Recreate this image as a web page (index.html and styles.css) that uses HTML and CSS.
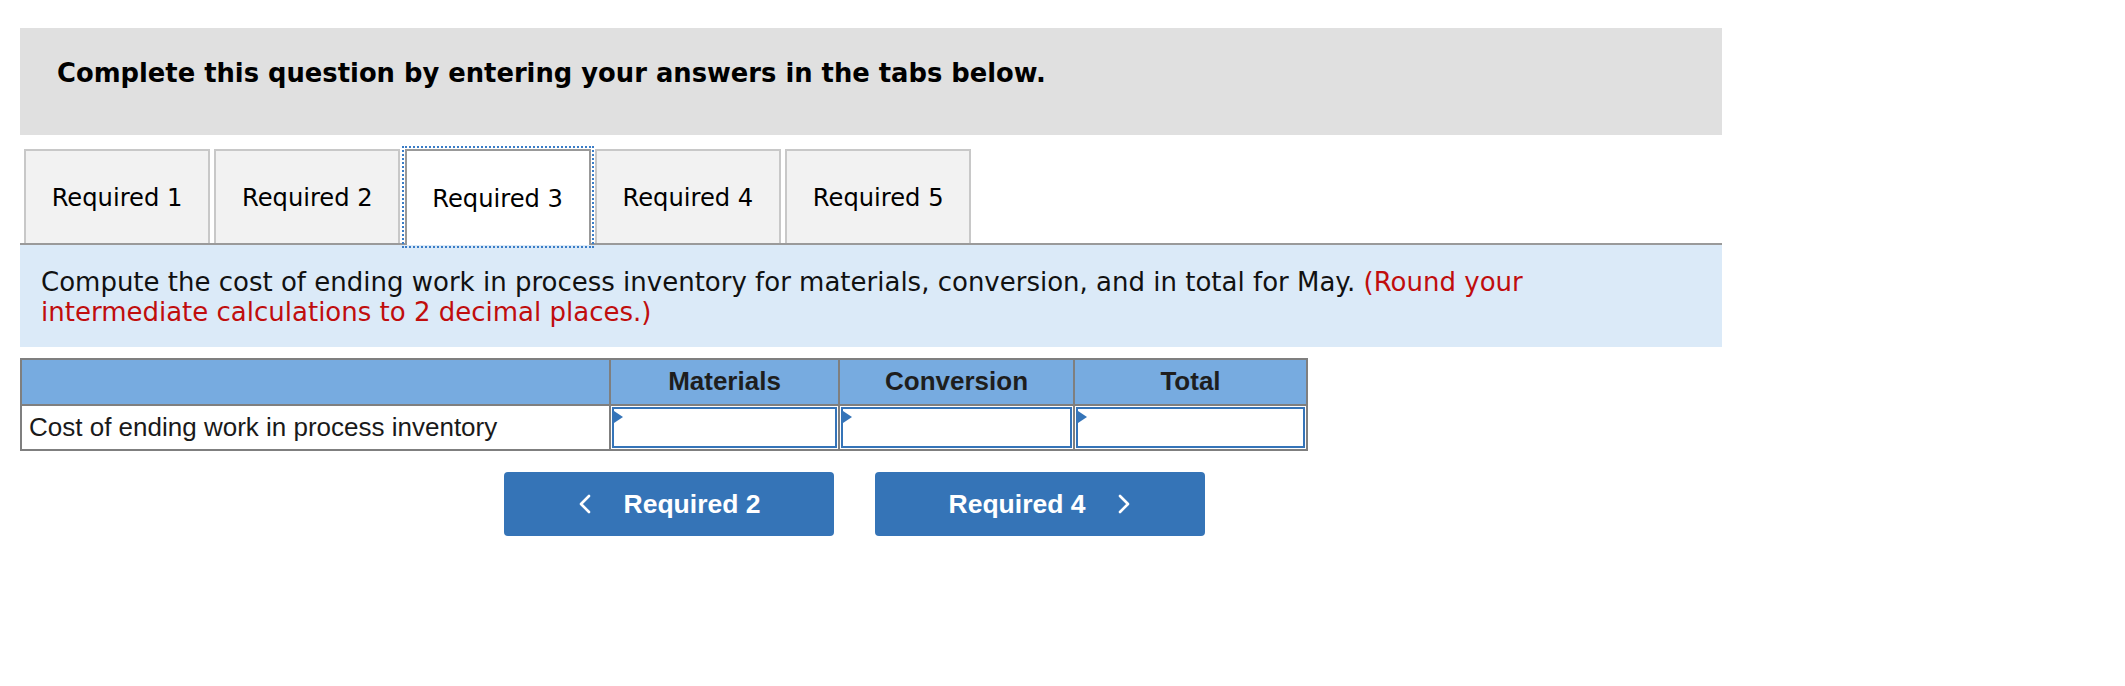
FILE: index.html
```html
<!DOCTYPE html>
<html>
<head>
<meta charset="utf-8">
<link rel="stylesheet" href="styles.css">
</head>
<body>
<div class="page">
  <div class="banner">Complete this question by entering your answers in the tabs below.</div>

  <div class="tabs">
    <div class="tab">Required 1</div>
    <div class="tab">Required 2</div>
    <div class="tab active">Required 3</div>
    <div class="tab">Required 4</div>
    <div class="tab">Required 5</div>
  </div>

  <div class="prompt">
    Compute the cost of ending work in process inventory for materials, conversion, and in total for May. <span class="hint">(Round your intermediate calculations to 2 decimal places.)</span>
  </div>

  <table class="grid">
    <colgroup>
      <col class="c-label">
      <col class="c-mat">
      <col class="c-conv">
      <col class="c-tot">
    </colgroup>
    <thead>
      <tr>
        <th></th>
        <th>Materials</th>
        <th>Conversion</th>
        <th>Total</th>
      </tr>
    </thead>
    <tbody>
      <tr>
        <td class="label">Cost of ending work in process inventory</td>
        <td class="cell"><div class="input"></div></td>
        <td class="cell"><div class="input"></div></td>
        <td class="cell"><div class="input"></div></td>
      </tr>
    </tbody>
  </table>

  <div class="nav">
    <button class="navbtn prev">
      <svg class="chev" viewBox="0 0 14 20" width="14" height="20"><path d="M11 2 L3 10 L11 18" fill="none" stroke="#fff" stroke-width="2.6" stroke-linecap="round" stroke-linejoin="round"/></svg>
      <span>Required 2</span>
    </button>
    <button class="navbtn next">
      <span>Required 4</span>
      <svg class="chev" viewBox="0 0 14 20" width="14" height="20"><path d="M3 2 L11 10 L3 18" fill="none" stroke="#fff" stroke-width="2.6" stroke-linecap="round" stroke-linejoin="round"/></svg>
    </button>
  </div>
</div>
</body>
</html>
```

FILE: styles.css
```css
html, body {
  margin: 0;
  padding: 0;
  background: #ffffff;
}

.page {
  margin-left: 20px;
  padding-top: 28px;
  width: 1702px;
}

.banner {
  background: #e0e0e0;
  height: 107px;
  box-sizing: border-box;
  padding: 29px 0 0 37px;
  font-family: "DejaVu Sans", Verdana, sans-serif;
  font-weight: bold;
  font-size: 25.8px;
  line-height: 32px;
  color: #000;
}

.tabs {
  display: flex;
  gap: 4.3px;
  margin-top: 14px;
  padding-left: 4px;
  height: 94px;
  border-bottom: 2px solid #9a9a9a;
}

.tab {
  width: 186px;
  height: 94px;
  box-sizing: border-box;
  border: 2px solid #c8c8c8;
  border-bottom: none;
  background: #f2f2f2;
  display: flex;
  align-items: center;
  justify-content: center;
  font-family: "DejaVu Sans", Verdana, sans-serif;
  font-size: 24.2px;
  color: #000;
  padding-top: 2px;
}

.tab.active {
  background: #ffffff;
  border-color: #999999;
  height: 96px;
  margin-bottom: -2px;
  outline: 2px dotted #3a7cc6;
  outline-offset: 1px;
}

.prompt {
  background: #dbeaf8;
  height: 102px;
  box-sizing: border-box;
  padding: 22px 90px 0 21px;
  font-family: "DejaVu Sans", Verdana, sans-serif;
  font-size: 26px;
  line-height: 30px;
  color: #111;
}

.hint {
  color: #c00d0d;
}

.grid {
  margin-top: 11px;
  border-collapse: collapse;
  width: 1286px;
  table-layout: fixed;
  font-family: "Liberation Sans", Arial, sans-serif;
  font-size: 26px;
}

.c-label { width: 589px; }
.c-mat { width: 229px; }
.c-conv { width: 235px; }
.c-tot { width: 233px; }

.grid th,
.grid td {
  border: 2px solid #7f7f7f;
  padding: 0;
}

.grid th {
  background: #77abe0;
  height: 42px;
  font-weight: bold;
  color: #1e1e1e;
  text-align: center;
  padding-bottom: 2px;
}

.grid td {
  height: 41px;
}

.grid td.label {
  padding-left: 7px;
  color: #1a1a1a;
  text-align: left;
  white-space: nowrap;
}

.grid td.cell {
  padding: 1px;
  vertical-align: top;
}

.input {
  position: relative;
  height: 41px;
  box-sizing: border-box;
  border: 2px solid #3574b8;
  background: #fff;
}

.input::before {
  content: "";
  position: absolute;
  left: 0;
  top: 2px;
  border-left: 9px solid #3574b8;
  border-top: 6px solid transparent;
  border-bottom: 6px solid transparent;
}

.nav {
  display: flex;
  gap: 41px;
  margin-top: 21px;
  padding-left: 484px;
}

.navbtn {
  width: 330px;
  height: 64px;
  border: none;
  border-radius: 4px;
  background: #3574b7;
  color: #fff;
  font-family: "Liberation Sans", Arial, sans-serif;
  font-weight: bold;
  font-size: 26.5px;
  display: flex;
  align-items: center;
  justify-content: center;
  gap: 32px;
  padding: 0;
}

.chev {
  display: block;
}
```
